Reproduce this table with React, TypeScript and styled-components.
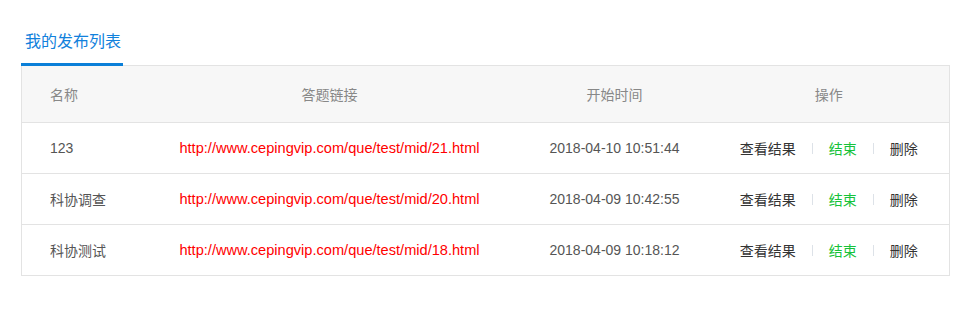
import React from "react";
import styled, { createGlobalStyle } from "styled-components";

const GlobalStyle = createGlobalStyle`
  body {
    margin: 0;
    background: #fff;
    font-family: "Liberation Sans", Arial, "Noto Sans CJK SC", sans-serif;
  }
`;

const Page = styled.div`
  padding: 31px 0 0 21px;
  width: 930px;
`;

const Tabs = styled.div`
  display: flex;
`;

const Tab = styled.div`
  font-size: 16px;
  line-height: 22px;
  color: #1181dc;
  padding: 0 2px 10px 4px;
  border-bottom: 3px solid #0a7fd8;
  margin-bottom: -1px;
  position: relative;
`;

const Table = styled.table`
  width: 929px;
  table-layout: fixed;
  border-collapse: collapse;
  border: 1px solid #e3e3e3;
  font-size: 14px;
`;

const HeadRow = styled.tr`
  background: #f7f7f7;
  height: 57px;
`;

const Th = styled.th<{ $align?: string; $width?: number; $pr?: number }>`
  box-sizing: border-box;
  font-weight: normal;
  color: #888;
  text-align: ${(p) => p.$align || "center"};
  width: ${(p) => (p.$width ? `${p.$width}px` : "auto")};
  padding: 0 ${(p) => p.$pr || 0}px 0 ${(p) => (p.$align === "left" ? "28px" : "0")};
`;

const Row = styled.tr`
  height: 51px;
  border-top: 1px solid #e3e3e3;
`;

const Td = styled.td<{ $align?: string }>`
  color: #555;
  text-align: ${(p) => p.$align || "center"};
  padding: 0 0 0 ${(p) => (p.$align === "left" ? "28px" : "0")};
  white-space: nowrap;
`;

const Link = styled.a`
  color: #ff0000;
  text-decoration: none;
  font-size: 14.6px;
`;

const Actions = styled.div`
  display: flex;
  justify-content: center;
  align-items: center;
  padding-right: 13px;
`;

const Action = styled.span<{ $green?: boolean }>`
  color: ${(p) => (p.$green ? "#16c23a" : "#333")};
  cursor: pointer;
`;

const Sep = styled.span`
  width: 1px;
  height: 11px;
  background: #dde2e8;
  margin: 0 16px;
`;

const rows = [
  { name: "123", id: 21, time: "2018-04-10 10:51:44" },
  { name: "科协调查", id: 20, time: "2018-04-09 10:42:55" },
  { name: "科协测试", id: 18, time: "2018-04-09 10:18:12" },
];

export default function App() {
  return (
    <Page>
      <GlobalStyle />
      <Tabs>
        <Tab>我的发布列表</Tab>
      </Tabs>
      <Table>
        <thead>
          <HeadRow>
            <Th $align="left" $width={130}>名称</Th>
            <Th $width={356}>答题链接</Th>
            <Th $width={214}>开始时间</Th>
            <Th $pr={13}>操作</Th>
          </HeadRow>
        </thead>
        <tbody>
          {rows.map((r) => (
            <Row key={r.id}>
              <Td $align="left">{r.name}</Td>
              <Td>
                <Link href="#">{`http://www.cepingvip.com/que/test/mid/${r.id}.html`}</Link>
              </Td>
              <Td>{r.time}</Td>
              <Td>
                <Actions>
                  <Action>查看结果</Action>
                  <Sep />
                  <Action $green>结束</Action>
                  <Sep />
                  <Action>删除</Action>
                </Actions>
              </Td>
            </Row>
          ))}
        </tbody>
      </Table>
    </Page>
  );
}
